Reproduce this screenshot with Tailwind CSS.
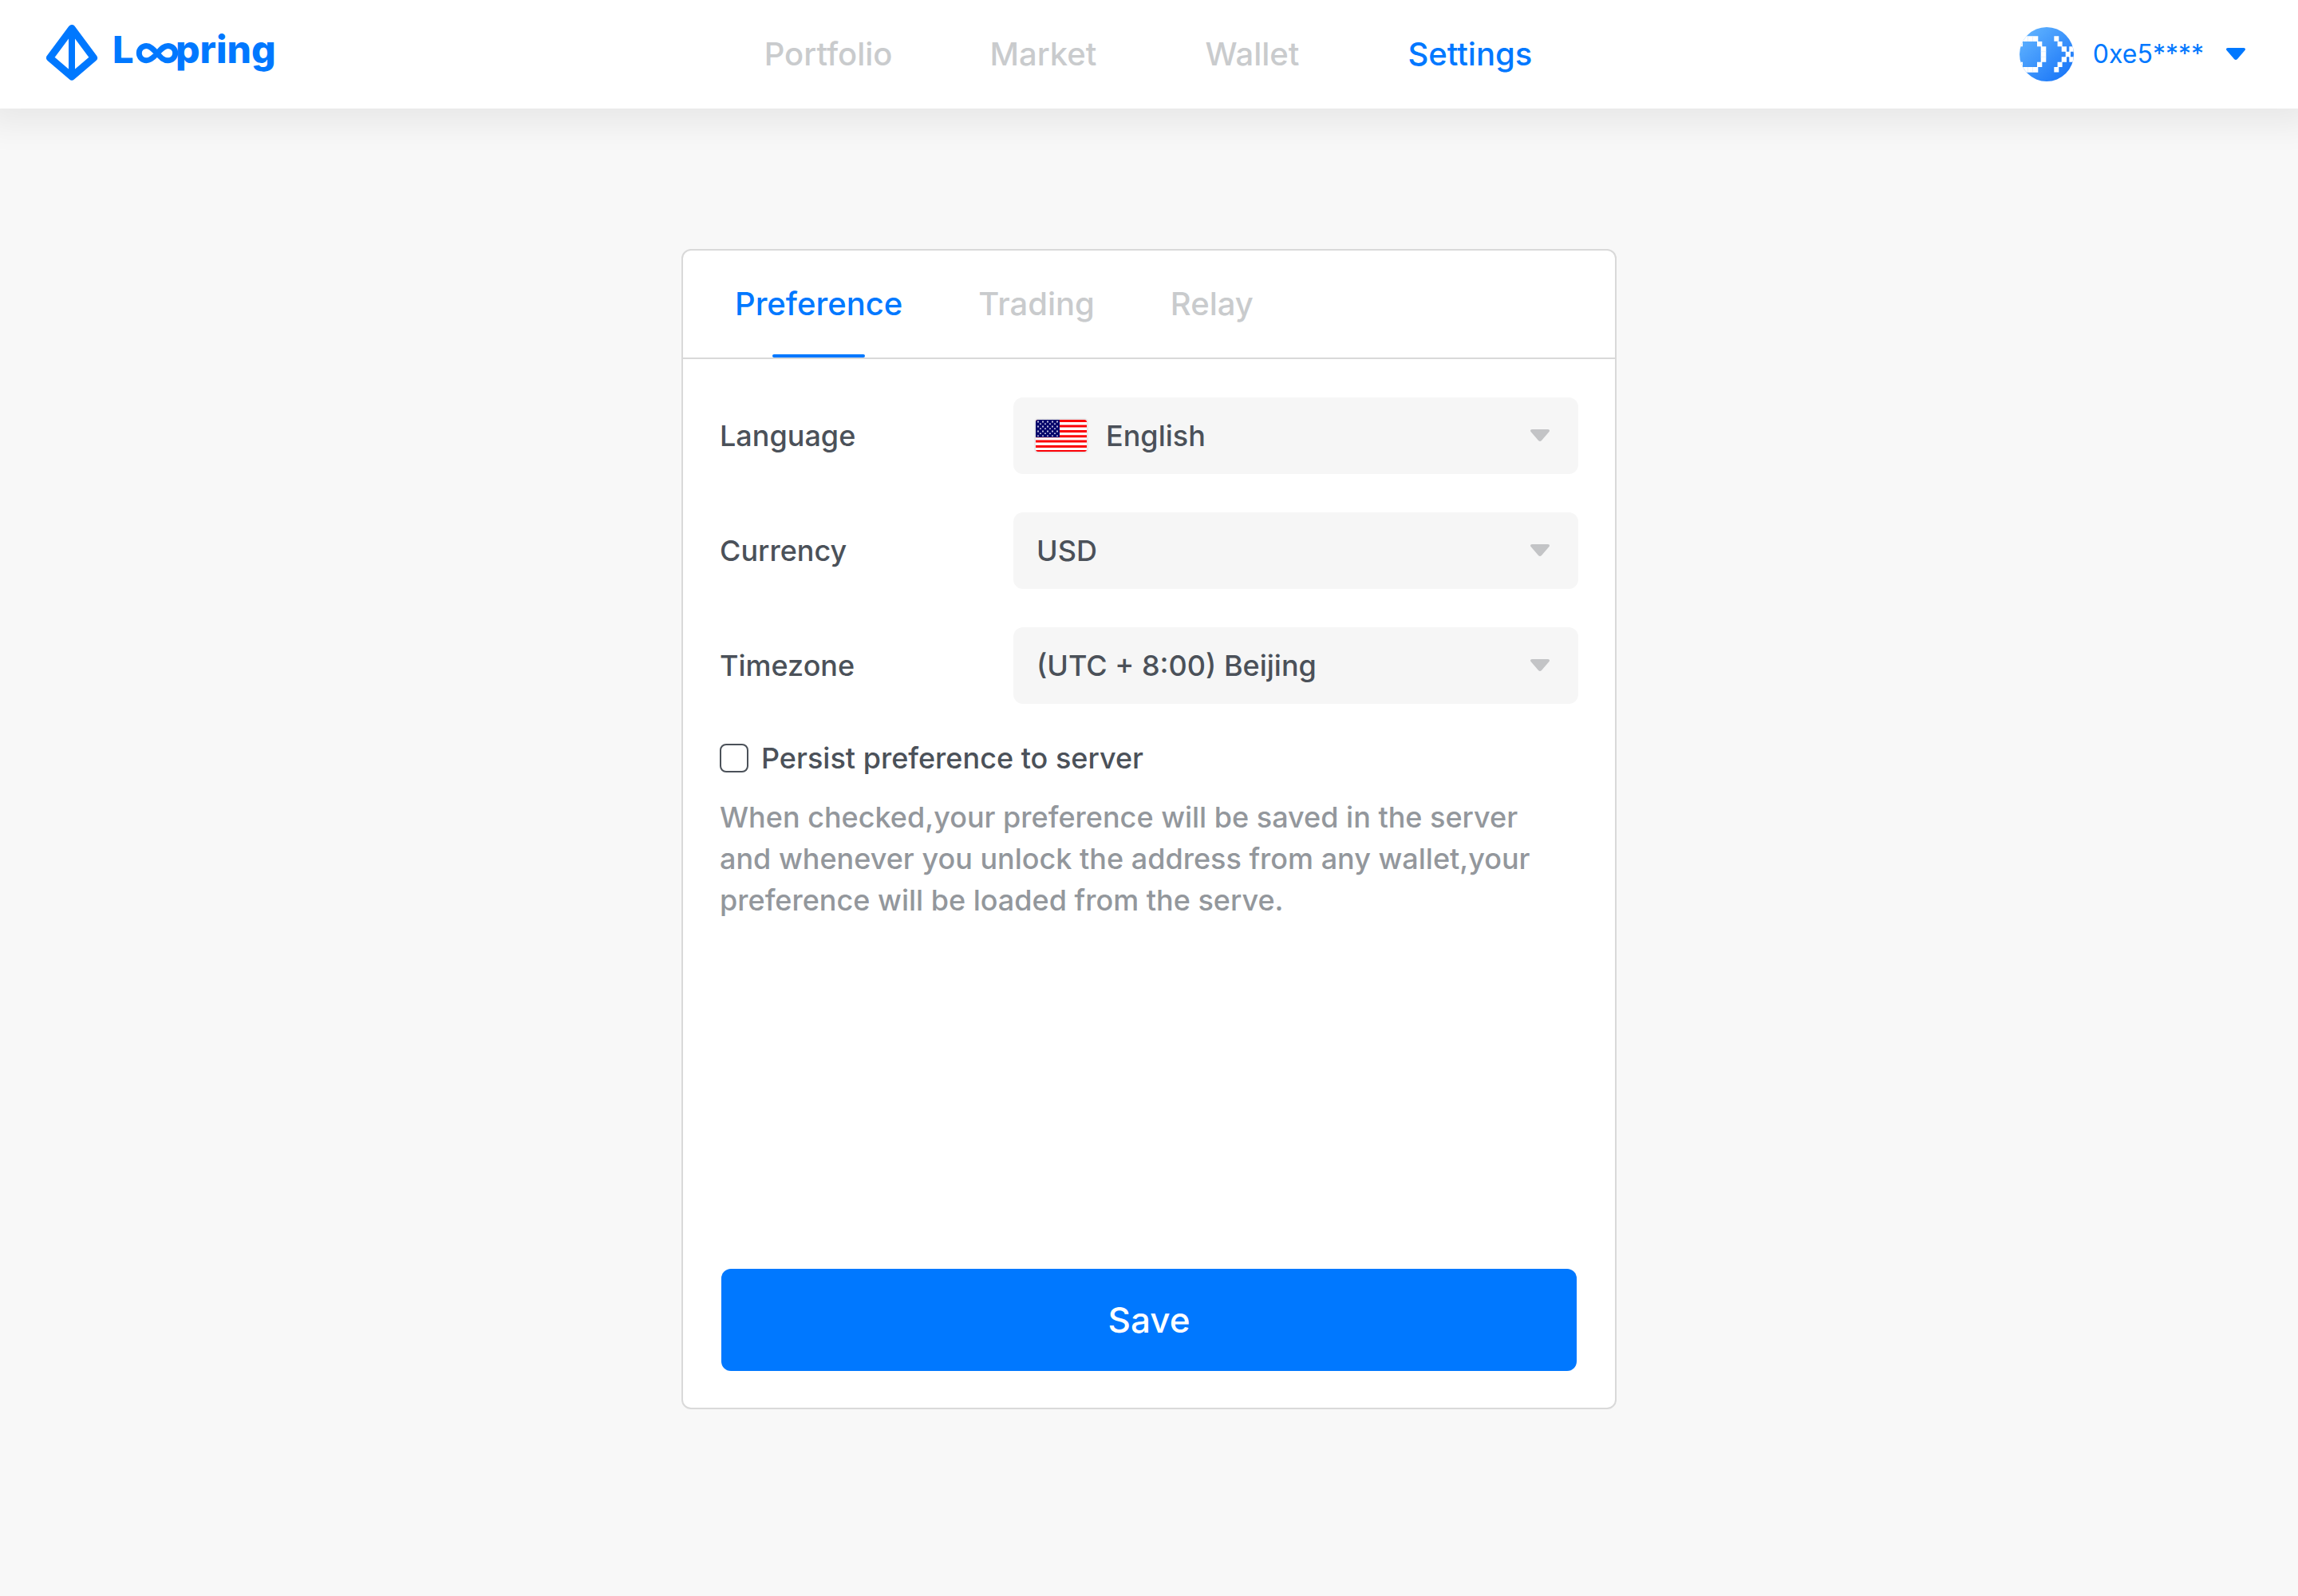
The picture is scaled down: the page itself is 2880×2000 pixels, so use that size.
<!DOCTYPE html>
<html lang="en">
<head>
<meta charset="utf-8">
<title>Loopring – Settings</title>
<script src="https://cdn.jsdelivr.net/npm/@tailwindcss/browser@4"></script>
</head>
<body class="min-h-screen bg-[#f8f8f8] font-['Inter',sans-serif] text-[#4b5159] overflow-x-hidden">
<header class="relative grid h-[136px] grid-cols-[1fr_auto_1fr] items-center bg-white pl-[58px] pr-[66px] shadow-[0_0_40px_20px_rgba(0,0,0,0.067)]">
  <a href="#" aria-label="Loopring" class="justify-self-start">
    <svg width="290" height="80" viewBox="0 4 290 80" fill="#0078ff">
      <g fill="none" stroke="#0078ff">
        <path d="M32 11.500L4.500 48.500L32 72L59.500 48.500Z" stroke-width="9" stroke-linejoin="round"/>
        <path d="M32 12V72" stroke-width="8"/>
        <path d="M139 43C134 37.500 130 33.400 125.500 33.400A9.200 9.200 0 0 0 125.500 51.800C130 51.800 134 48.500 139 43C144 37.500 147 33.400 152.500 33.400A9.200 9.200 0 0 1 152.500 51.800C147 51.800 144 48.500 139 43Z" stroke-width="7"/>
      </g>
      <text x="83" y="55" font-size="47" font-weight="800">L</text>
      <text x="162" y="55" font-size="48" font-weight="800">pring</text>
    </svg>
  </a>
  <nav class="flex items-center pl-1.5 text-[40px] leading-[48px] font-medium text-[#c9cbcd]">
    <a href="#" class="mr-[122px]">Portfolio</a>
    <a href="#" class="mr-[136px]">Market</a>
    <a href="#" class="mr-[136px]">Wallet</a>
    <a href="#" class="text-[#0078ff]" aria-current="page">Settings</a>
  </nav>
  <button type="button" class="flex items-center justify-self-end text-[32px] leading-10 text-[#0078ff]">
    <svg width="68" height="68" viewBox="0 0 68 68" class="mr-6">
      <defs>
        <linearGradient id="av" x1="0.100" y1="0.100" x2="0.850" y2="0.900"><stop offset="0" stop-color="#5fb2ff"/><stop offset="1" stop-color="#1c78f8"/></linearGradient>
        <clipPath id="round"><circle cx="34" cy="34" r="34"/></clipPath>
      </defs>
      <circle cx="34" cy="34" r="34" fill="url(#av)"/>
      <g clip-path="url(#round)" fill="#fff">
        <path d="M0 11.300H23.300V18H0ZM0 18H4V24.300H0ZM22 18H28.300V24.300H22ZM26.700 24.300H33.300V43.700H26.700ZM22 43.700H28.300V50H22ZM0 43.700H4V50H0ZM0 50H23.300V56.700H0Z"/>
        <path d="M43.300 11.300h6v6.500h-6ZM47.600 18h6v6.300h-6ZM52.700 24.300h6.300v6.400h-6.300ZM57.700 30.700h6.300v6.600h-6.300ZM62.300 24.300h6v6.400h-6ZM62.300 37.300h6v6.400h-6ZM52.700 37.300h6.300v6.400h-6.300ZM47.600 43.700h6v6.300h-6ZM43.300 50h6v6.500h-6Z"/>
        <path d="M10.300 11.300V18M16.500 11.300V18M10.300 50V56.700M16.500 50V56.700M26.700 30.700H33.300M26.700 37.300H33.300" stroke="#d3e8ff" stroke-width="0.600"/>
      </g>
    </svg>
    0xe5****
    <svg width="24" height="16" viewBox="0 0 24 16" fill="#0078ff" class="ml-7"><path d="M2 0H22Q25 .5 23.500 3L14 14Q12 16 10 14L.5 3Q-1 .5 2 0Z"/></svg>
  </button>
</header>

<main class="flex justify-center px-8 pt-[176px] pb-[100px]">
  <form class="flex min-h-[1454px] w-full max-w-[1172px] flex-col rounded-xl border-2 border-[#d9d9d9] bg-white">
    <div role="tablist" class="flex h-[136px] gap-[95px] border-b-2 border-[#d9d9d9] pl-[65px] text-[40px] font-medium text-[#c9cbcd]">
      <button type="button" role="tab" aria-selected="true" class="relative flex items-center text-[#0078ff]">Preference
        <span class="absolute bottom-0 left-1/2 h-1 w-[116px] -translate-x-1/2 rounded-sm bg-[#0078ff]"></span>
      </button>
      <button type="button" role="tab" aria-selected="false" class="flex items-center">Trading</button>
      <button type="button" role="tab" aria-selected="false" class="flex items-center">Relay</button>
    </div>

    <div class="flex flex-1 flex-col px-[46px] pt-12 pb-[46px] text-[36px] leading-[52px] font-medium">
      <div class="flex flex-col gap-12">
        <div class="flex items-center justify-between">
          <label for="language">Language</label>
          <div class="relative w-[708px]">
            <select id="language" class="block h-24 w-full appearance-none rounded-xl bg-[#f6f6f6] pr-20 pl-[116px]"><option>English</option></select>
            <svg width="68" height="44" viewBox="0 0 68 44" class="pointer-events-none absolute top-[26px] left-[26px]">
              <defs>
                <clipPath id="flag"><rect x="2" y="2" width="64" height="40" rx="3"/></clipPath>
                <pattern id="stars" width="6" height="6" patternUnits="userSpaceOnUse" x="3" y="2"><path d="M1 1.500h2v2h-2ZM4 4.500h2v2h-2Z" fill="#b9b9dc"/></pattern>
              </defs>
              <rect width="68" height="44" rx="5" fill="#e9e9ea"/>
              <g clip-path="url(#flag)">
                <rect x="2" y="2" width="64" height="40" fill="#fff"/>
                <path d="M2 3.500H66M2 10H66M2 16.400H66M2 22.800H66M2 29H66M2 35.400H66M2 41.500H66" stroke="#fb0006" stroke-width="3"/>
                <rect x="2" y="2" width="30" height="22" fill="#06066b"/>
                <rect x="3" y="2" width="28" height="21" fill="url(#stars)"/>
              </g>
            </svg>
            <svg width="24" height="16" viewBox="0 0 24 16" fill="#c3c4c6" class="pointer-events-none absolute top-10 right-9"><path d="M2 0H22Q25 .5 23.500 3L14 14Q12 16 10 14L.5 3Q-1 .5 2 0Z"/></svg>
          </div>
        </div>
        <div class="flex items-center justify-between">
          <label for="currency">Currency</label>
          <div class="relative w-[708px]">
            <select id="currency" class="block h-24 w-full appearance-none rounded-xl bg-[#f6f6f6] pr-20 pl-[29px]"><option>USD</option></select>
            <svg width="24" height="16" viewBox="0 0 24 16" fill="#c3c4c6" class="pointer-events-none absolute top-10 right-9"><path d="M2 0H22Q25 .5 23.500 3L14 14Q12 16 10 14L.5 3Q-1 .5 2 0Z"/></svg>
          </div>
        </div>
        <div class="flex items-center justify-between">
          <label for="timezone">Timezone</label>
          <div class="relative w-[708px]">
            <select id="timezone" class="block h-24 w-full appearance-none rounded-xl bg-[#f6f6f6] pr-20 pl-[29px]"><option>(UTC + 8:00) Beijing</option></select>
            <svg width="24" height="16" viewBox="0 0 24 16" fill="#c3c4c6" class="pointer-events-none absolute top-10 right-9"><path d="M2 0H22Q25 .5 23.500 3L14 14Q12 16 10 14L.5 3Q-1 .5 2 0Z"/></svg>
          </div>
        </div>
      </div>
      <div class="mt-[42px] flex items-center gap-4">
        <input id="persist" type="checkbox" class="size-9 appearance-none rounded-lg border-2 border-[#4b5159] bg-white">
        <label for="persist">Persist preference to server</label>
      </div>
      <p class="mt-[22px] max-w-[1050px] text-[#93979c]">When checked,your preference will be saved in the server and whenever you unlock the address from any wallet,your preference will be loaded from the serve.</p>
      <button type="submit" class="mx-0.5 mt-auto h-32 rounded-xl bg-[#0078ff] text-[44px] text-white">Save</button>
    </div>
  </form>
</main>
</body>
</html>
